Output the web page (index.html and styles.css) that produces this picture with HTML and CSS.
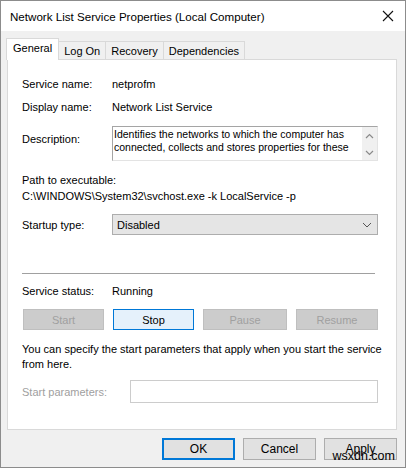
FILE: index.html
```html
<!DOCTYPE html>
<html lang="en">
	<head>
		<title>Network List Service Properties</title>
		<meta charset="utf-8">
		<link rel="stylesheet" href="styles.css">
	</head>
	<body>
		<div class="window">
			<div class="titlebar">
				<span class="title">Network List Service Properties (Local Computer)</span>
				<svg class="close" width="12" height="12" viewBox="0 0 12 12">
					<path d="M1 1 L11 11 M11 1 L1 11" stroke="#111" stroke-width="1.1" fill="none"/>
				</svg>
			</div>
			<div class="client">
				<div class="tabs">
					<div class="tab active">General</div>
					<div class="tab">Log On</div>
					<div class="tab">Recovery</div>
					<div class="tab">Dependencies</div>
				</div>
				<div class="panel">
					<div class="row first">
						<span class="label">Service name:</span>
						<span>netprofm</span>
					</div>
					<div class="row gap7">
						<span class="label">Display name:</span>
						<span>Network List Service</span>
					</div>
					<div class="row desc-row">
						<span class="label desc-label">Description:</span>
						<div class="desc">
							<div class="desc-text">Identifies the networks to which the computer has connected, collects and stores properties for these</div>
							<div class="scroll">
								<svg width="9" height="6" viewBox="0 0 9 6"><path d="M1 5 L4.5 1.5 L8 5" stroke="#8a8a8a" stroke-width="1.2" fill="none"/></svg>
								<svg width="9" height="6" viewBox="0 0 9 6"><path d="M1 1 L4.5 4.5 L8 1" stroke="#8a8a8a" stroke-width="1.2" fill="none"/></svg>
							</div>
						</div>
					</div>
					<div class="path-label">Path to executable:</div>
					<div class="path">C:\WINDOWS\System32\svchost.exe -k LocalService -p</div>
					<div class="row startup-row">
						<span class="label">Startup type:</span>
						<div class="combo">
							<span>Disabled</span>
							<svg width="10" height="6" viewBox="0 0 10 6"><path d="M1 1 L5 5 L9 1" stroke="#555" stroke-width="1" fill="none"/></svg>
						</div>
					</div>
					<div class="separator"></div>
					<div class="row status-row">
						<span class="label">Service status:</span>
						<span>Running</span>
					</div>
					<div class="buttons">
						<button class="btn" disabled>Start</button>
						<button class="btn focus">Stop</button>
						<button class="btn" disabled>Pause</button>
						<button class="btn" disabled>Resume</button>
					</div>
					<p class="note">You can specify the start parameters that apply when you start the service from here.</p>
					<div class="row params-row">
						<span class="label muted">Start parameters:</span>
						<div class="params"></div>
					</div>
				</div>
				<div class="footer">
					<button class="dlg default">OK</button>
					<button class="dlg">Cancel</button>
					<button class="dlg">Apply</button>
				</div>
			</div>
			<span class="stamp">wsxdn.com</span>
		</div>
	</body>
</html>
```

FILE: styles.css
```css
html, body {
	margin: 0;
	padding: 0;
}

body {
	font-family: "Liberation Sans", Arial, sans-serif;
	font-size: 11px;
	color: #000;
	background: #fff;
}

.window {
	position: relative;
	width: 406px;
	height: 468px;
	box-sizing: border-box;
	border: 1px solid #8c8c8c;
	display: flex;
	flex-direction: column;
	background: #f0f0f0;
}

.titlebar {
	height: 30px;
	background: #fff;
	display: flex;
	align-items: center;
	justify-content: space-between;
	padding: 0 10px 0 9px;
}

.title {
	font-size: 11.6px;
	color: #000;
}

.close {
	margin-right: 1px;
}

.client {
	flex: 1;
	display: flex;
	flex-direction: column;
	padding: 7px 8px 0 5px;
}

.tabs {
	display: flex;
	align-items: flex-end;
	height: 21px;
	position: relative;
	z-index: 1;
}

.tab {
	height: 17px;
	line-height: 18px;
	padding: 0 5px;
	border: 1px solid #d9d9d9;
	border-bottom: none;
	margin-left: -1px;
	background: #f0f0f0;
}

.tab:first-child {
	margin-left: 0;
}

.tab.active {
	height: 21px;
	line-height: 19px;
	padding: 0 6px;
	background: #fff;
	margin-bottom: -1px;
}

.panel {
	height: 371px;
	box-sizing: border-box;
	background: #fff;
	border: 1px solid #d9d9d9;
	margin-left: 1px;
	padding: 16px 18px 0 14px;
}

.row {
	display: grid;
	grid-template-columns: 90px 1fr;
	align-items: center;
	line-height: 16px;
}

.gap7 {
	margin-top: 7px;
}

.desc-row {
	margin-top: 11px;
	align-items: start;
}

.desc-label {
	padding-top: 5px;
}

.desc {
	height: 35px;
	box-sizing: border-box;
	border: 1px solid #a5a5a5;
	border-right-color: #e3e3e3;
	border-bottom-color: #e3e3e3;
	display: flex;
}

.desc-text {
	flex: 1;
	font-size: 10.5px;
	line-height: 13px;
	padding: 1px 0 0 1px;
	overflow: hidden;
}

.scroll {
	width: 15px;
	background: #f0f0f0;
	display: flex;
	flex-direction: column;
	justify-content: space-between;
	align-items: center;
	padding: 6px 0 4px;
}

.path-label {
	margin-top: 11px;
	line-height: 16px;
}

.path {
	line-height: 16px;
}

.startup-row {
	margin-top: 10px;
}

.combo {
	height: 21px;
	box-sizing: border-box;
	border: 1px solid #adadad;
	background: #e5e5e5;
	display: flex;
	align-items: center;
	justify-content: space-between;
	padding: 0 5px 0 4px;
}

.separator {
	margin-top: 38px;
	height: 1px;
	background: #a0a0a0;
	margin-right: 3px;
}

.status-row {
	margin-top: 9px;
}

.buttons {
	margin-top: 10px;
	display: grid;
	grid-template-columns: 81px 81px 84px 82px;
	justify-content: space-between;
	padding-left: 1px;
}

.btn, .dlg {
	font-family: inherit;
	font-size: 11px;
	height: 21px;
	padding: 0;
	margin: 0;
	border: 1px solid #adadad;
	background: #e1e1e1;
	color: #000;
}

.btn[disabled] {
	background: #cccccc;
	border-color: #bfbfbf;
	color: #a0a0a0;
}

.btn.focus {
	background: #e5f1fb;
	border-color: #0078d7;
}

.note {
	margin: 12px -14px 0 0;
	line-height: 15px;
}

.params-row {
	margin-top: 8px;
	grid-template-columns: 108px 1fr;
}

.muted {
	color: #a0a0a0;
}

.params {
	height: 23px;
	box-sizing: border-box;
	border: 1px solid #cccccc;
	background: #fff;
}

.footer {
	display: flex;
	justify-content: flex-end;
	gap: 8px;
	margin-top: 8px;
}

.dlg {
	width: 73px;
	height: 22px;
	font-size: 12px;
}

.dlg.default {
	border: 2px solid #0078d7;
}

.stamp {
	position: absolute;
	right: 10px;
	bottom: 3px;
	font-size: 12.5px;
	color: #000;
	line-height: 15px;
}
```
